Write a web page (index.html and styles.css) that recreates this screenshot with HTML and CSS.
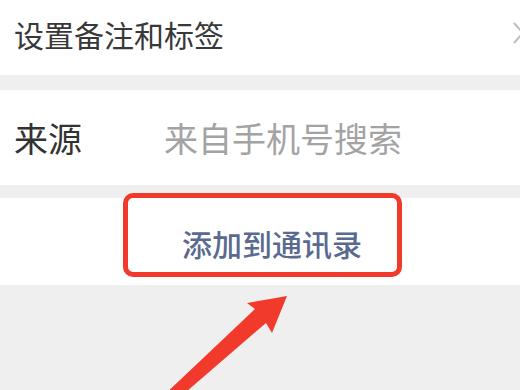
FILE: index.html
```html
<!DOCTYPE html>
<html lang="zh-CN">
<head>
<meta charset="utf-8">
<title>添加到通讯录</title>
<link rel="stylesheet" href="styles.css">
</head>
<body>
<div class="page">
  <div class="row row-remark">
    <span class="remark">设置备注和标签</span>
    <svg class="chevron" width="14" height="24" viewBox="0 0 14 24"><path d="M2 2 L11 12 L2 22" fill="none" stroke="#bdbdbd" stroke-width="2"/></svg>
  </div>
  <div class="row row-source">
    <span class="label">来源</span>
    <span class="value">来自手机号搜索</span>
  </div>
  <div class="row row-action">
    <span class="action">添加到通讯录</span>
  </div>
  <div class="highlight"></div>
  <svg class="arrow" width="520" height="390" viewBox="0 0 520 390">
    <polygon points="287,296 272,333 266,323 179,398 161,398 255,309 247,303" fill="#f23a2c"/>
  </svg>
</div>
</body>
</html>
```
FILE: styles.css
```css
html, body {
  margin: 0;
  padding: 0;
}
body {
  width: 520px;
  height: 390px;
  overflow: hidden;
  background: #efefef;
  font-family: "Noto Sans CJK SC", "Noto Sans", sans-serif;
}
.page {
  position: relative;
  width: 520px;
  height: 390px;
  overflow: hidden;
  display: flex;
  flex-direction: column;
}
.row {
  background: #ffffff;
  display: flex;
  align-items: center;
  box-sizing: border-box;
}
.row-remark {
  height: 75px;
  padding: 0 0 8px 14px;
  justify-content: space-between;
}
.remark {
  font-size: 30px;
  color: #383838;
  line-height: 1;
}
.chevron {
  margin-right: -6px;
  margin-top: -2px;
}
.row-source {
  height: 95px;
  margin-top: 15px;
  padding: 0 0 0 14px;
}
.label {
  width: 150px;
  font-size: 34px;
  color: #333333;
  line-height: 1;
}
.value {
  font-size: 34px;
  color: #a3a3a3;
  line-height: 1;
}
.row-action {
  height: 87px;
  margin-top: 13px;
  padding: 0 0 0 182px;
}
.action {
  font-size: 30px;
  color: #5a6a8f;
  font-weight: 500;
  line-height: 1;
  margin-top: 2px;
}
.highlight {
  position: absolute;
  left: 123px;
  top: 193px;
  width: 279px;
  height: 84px;
  box-sizing: border-box;
  border: 5px solid #f23a2c;
  border-radius: 10px;
}
.arrow {
  position: absolute;
  left: 0;
  top: 0;
  pointer-events: none;
}
```
